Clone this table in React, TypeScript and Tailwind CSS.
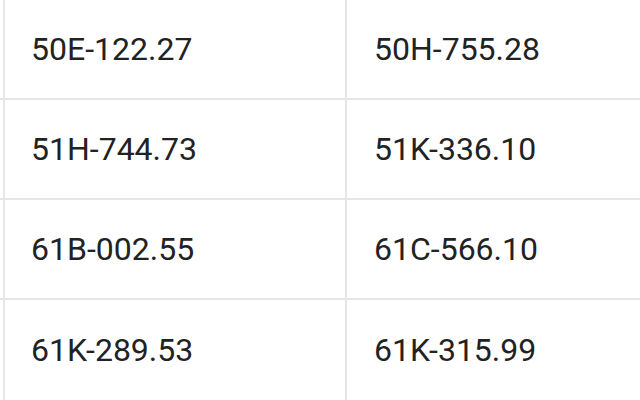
import React from "react";

const rows: [string, string][] = [
  ["50E-122.27", "50H-755.28"],
  ["51H-744.73", "51K-336.10"],
  ["61B-002.55", "61C-566.10"],
  ["61K-289.53", "61K-315.99"],
];

export default function App() {
  return (
    <div className="w-[640px] h-[400px] overflow-hidden bg-white" style={{ fontFamily: "Roboto, 'Noto Sans', sans-serif" }}>
      {rows.map(([a, b], i) => (
        <div key={i} className="flex h-[100px] border-b-2 last:border-b-0 border-[#e6e6e6] pl-[3px]">
          <div className="w-[344px] shrink-0 border-l-2 border-r-2 border-[#e6e6e6] flex items-center pl-[26px] text-[32px] text-[#222222]">
            {a}
          </div>
          <div className="flex-1 flex items-center pl-[27px] text-[32px] text-[#222222]">
            {b}
          </div>
        </div>
      ))}
    </div>
  );
}
